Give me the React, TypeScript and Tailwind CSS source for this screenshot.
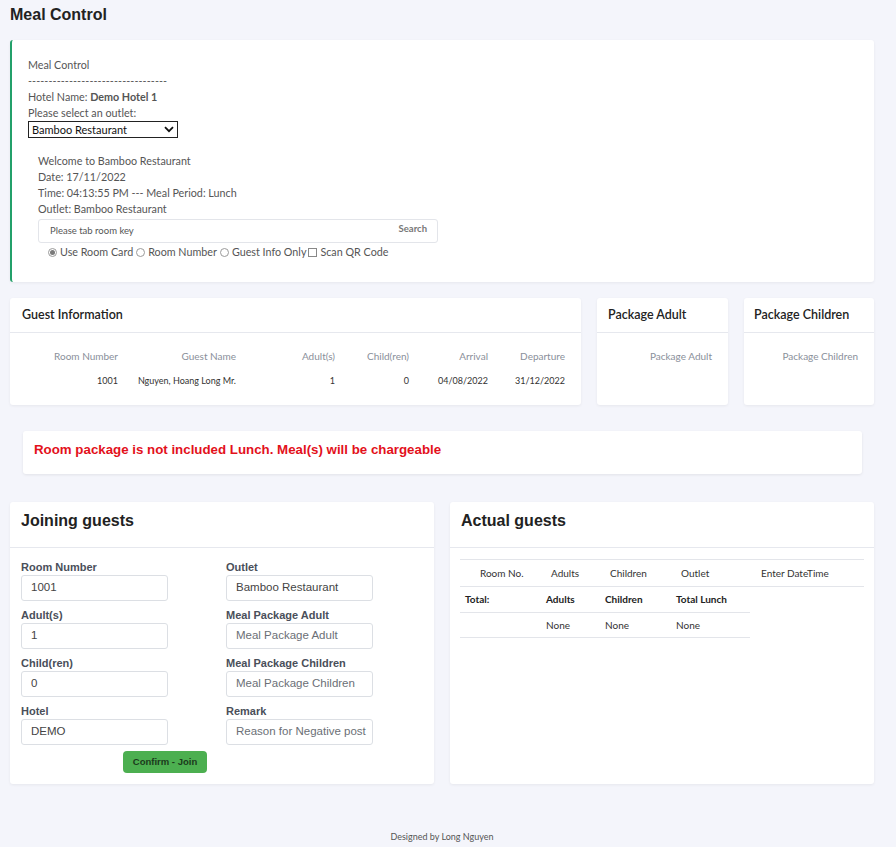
import React from "react";

const seg = { fontFamily: "Lato, 'Open Sans', sans-serif" };
const arial = { fontFamily: "'Liberation Sans', Arial, sans-serif" };

function Radio({ checked }: { checked?: boolean }) {
  return (
    <span className="inline-flex w-[9px] h-[9px] rounded-full border border-[#9a9a9a] items-center justify-center mr-[3px] bg-white">
      {checked && <span className="w-[5px] h-[5px] rounded-full bg-[#7a7a7a]" />}
    </span>
  );
}

function Field({ label, value, muted }: { label: string; value: string; muted?: boolean }) {
  return (
    <div className="flex flex-col mb-[7px]">
      <div className="text-[11px] leading-[14px] font-bold text-[#4a4f5a] mb-px" style={arial}>{label}</div>
      <div
        className={`w-[147px] h-[26px] border border-[#dcdfe4] rounded-[3px] pl-[9px] flex items-center text-[11.5px] bg-white ${muted ? "text-[#6b6f76]" : "text-[#444]"}`}
        style={arial}
      >
        {value}
      </div>
    </div>
  );
}

export default function App() {
  return (
    <div className="min-h-[847px] bg-[#f4f5fb] pl-[10px] pr-[22px] text-[#555]" style={seg}>
      <div className="h-[40px] pt-[5px]">
        <h1 className="text-[16px] leading-[20px] font-bold text-[#222]" style={arial}>Meal Control</h1>
      </div>

      {/* Card 1 */}
      <div className="bg-white border-l-2 border-[#23a06a] rounded-[3px] shadow-[0_1px_3px_rgba(0,0,0,0.06)] pl-[16px] pt-[17px] pb-[22px] text-[10.75px] leading-[16px] text-[#555]">
        <div>Meal Control</div>
        <div className="tracking-[0.1px]">----------------------------------</div>
        <div>Hotel Name: <span className="font-bold">Demo Hotel 1</span></div>
        <div>Please select an outlet:</div>
        <div className="w-[150px] h-[17px] border border-[#222] flex items-center justify-between px-[3px] text-[11px] text-[#111]">
          <span>Bamboo Restaurant</span>
          <svg width="10" height="7" viewBox="0 0 10 7"><path d="M1 1.2 L5 5.2 L9 1.2" stroke="#111" strokeWidth="1.8" fill="none" /></svg>
        </div>
        <div className="pl-[10px] mt-[15px]">
          <div>Welcome to Bamboo Restaurant</div>
          <div>Date: 17/11/2022</div>
          <div>Time: 04:13:55 PM --- Meal Period: Lunch</div>
          <div>Outlet: Bamboo Restaurant</div>
          <div className="mt-[2px] w-[400px] h-[24px] border border-[#e3e5ea] rounded-[3px] flex items-center justify-between pl-[11px] pr-[10px]">
            <span className="text-[9.5px] text-[#555]">Please tab room key</span>
            <span className="text-[9.5px] font-bold text-[#777] -mt-[4px]">Search</span>
          </div>
          <div className="pl-[10px] flex items-center h-[16px] mt-px text-[10.75px] text-[#555]">
            <Radio checked /><span className="mr-[3px]">Use Room Card</span>
            <Radio /><span className="mr-[3px]">Room Number</span>
            <Radio /><span className="mr-[2px]">Guest Info Only</span>
            <span className="inline-block w-[9px] h-[9px] border border-[#888] mr-[3px]" />
            <span>Scan QR Code</span>
          </div>
        </div>
      </div>

      {/* Row 2 */}
      <div className="flex gap-[16px] mt-[16px]">
        <div className="w-[571px] h-[107px] bg-white rounded-[3px] shadow-[0_1px_3px_rgba(0,0,0,0.06)]">
          <div className="h-[35px] border-b border-[#e6e8ee] flex items-center pl-[12px] text-[12.5px] font-semibold text-[#222]">Guest Information</div>
          <div className="pl-[12px] pt-[15px] text-right">
            <div className="flex h-[16px] items-center text-[#8a8f9a] text-[10px]">
              <div className="w-[96px]">Room Number</div>
              <div className="w-[118px]">Guest Name</div>
              <div className="w-[99px]">Adult(s)</div>
              <div className="w-[74px]">Child(ren)</div>
              <div className="w-[79px]">Arrival</div>
              <div className="w-[77px]">Departure</div>
            </div>
            <div className="flex h-[16px] items-center mt-[9px] text-[#333] text-[9px]">
              <div className="w-[96px]">1001</div>
              <div className="w-[118px]">Nguyen, Hoang Long Mr.</div>
              <div className="w-[99px]">1</div>
              <div className="w-[74px]">0</div>
              <div className="w-[79px]">04/08/2022</div>
              <div className="w-[77px]">31/12/2022</div>
            </div>
          </div>
        </div>
        <div className="w-[131px] h-[107px] bg-white rounded-[3px] shadow-[0_1px_3px_rgba(0,0,0,0.06)]">
          <div className="h-[35px] border-b border-[#e6e8ee] flex items-center pl-[11px] text-[12.5px] font-semibold text-[#222]">Package Adult</div>
          <div className="pr-[16px] pt-[15px] text-[10px] text-right text-[#8a8f9a] leading-[16px]">Package Adult</div>
        </div>
        <div className="w-[130px] h-[107px] bg-white rounded-[3px] shadow-[0_1px_3px_rgba(0,0,0,0.06)]">
          <div className="h-[35px] border-b border-[#e6e8ee] flex items-center pl-[10px] text-[12.5px] font-semibold text-[#222]">Package Children</div>
          <div className="pr-[16px] pt-[15px] text-[10px] text-right text-[#8a8f9a] leading-[16px]">Package Children</div>
        </div>
      </div>

      {/* Alert */}
      <div className="ml-[13px] mr-[12px] mt-[26px] h-[43px] bg-white rounded-[3px] shadow-[0_1px_3px_rgba(0,0,0,0.08)] flex items-center pl-[11px] pb-[6px]">
        <span className="text-[13.3px] font-bold text-[#e3111b]" style={arial}>Room package is not included Lunch. Meal(s) will be chargeable</span>
      </div>

      {/* Bottom */}
      <div className="flex gap-[16px] mt-[28px]">
        <div className="w-[424px] h-[282px] bg-white rounded-[3px] shadow-[0_1px_3px_rgba(0,0,0,0.06)]">
          <div className="h-[46px] border-b border-[#e6e8ee] flex items-start pt-[9px] pl-[11px] text-[16px] leading-[20px] font-bold text-[#222]" style={arial}>Joining guests</div>
          <div className="pl-[11px] pt-[12px]">
            <div className="flex">
              <div className="w-[205px]">
                <Field label="Room Number" value="1001" />
                <Field label="Adult(s)" value="1" />
                <Field label="Child(ren)" value="0" />
                <Field label="Hotel" value="DEMO" />
              </div>
              <div>
                <Field label="Outlet" value="Bamboo Restaurant" />
                <Field label="Meal Package Adult" value="Meal Package Adult" muted />
                <Field label="Meal Package Children" value="Meal Package Children" muted />
                <Field label="Remark" value="Reason for Negative post" muted />
              </div>
            </div>
            <div className="ml-[102px] -mt-[1px] w-[84px] h-[22px] bg-[#4caf50] rounded-[4px] flex items-center justify-center text-[9.5px] font-bold text-[#1b3a1c]" style={arial}>Confirm - Join</div>
          </div>
        </div>

        <div className="w-[424px] h-[282px] bg-white rounded-[3px] shadow-[0_1px_3px_rgba(0,0,0,0.06)]">
          <div className="h-[46px] border-b border-[#e6e8ee] flex items-start pt-[9px] pl-[11px] text-[16px] leading-[20px] font-bold text-[#222]" style={arial}>Actual guests</div>
          <div className="px-[10px] pt-[11px] text-[10px] text-[#333]">
            <div className="border-t border-b border-[#e3e5ea] h-[28px] flex items-center">
              <div className="w-[91px] pl-[20px]">Room No.</div>
              <div className="w-[59px]">Adults</div>
              <div className="w-[71px]">Children</div>
              <div className="w-[80px]">Outlet</div>
              <div>Enter DateTime</div>
            </div>
            <div className="w-[290px]">
              <div className="border-b border-[#e3e5ea] h-[26px] flex items-center font-bold text-[#222]">
                <div className="w-[81px] pl-[5px]">Total:</div>
                <div className="w-[59px] pl-[5px]">Adults</div>
                <div className="w-[71px] pl-[5px]">Children</div>
                <div className="w-[79px] pl-[5px]">Total Lunch</div>
              </div>
              <div className="border-b border-[#e3e5ea] h-[25px] flex items-center">
                <div className="w-[81px] pl-[5px]"></div>
                <div className="w-[59px] pl-[5px]">None</div>
                <div className="w-[71px] pl-[5px]">None</div>
                <div className="w-[79px] pl-[5px]">None</div>
              </div>
            </div>
          </div>
        </div>
      </div>

      <div className="mt-[46px] text-center text-[9px] text-[#555]">Designed by Long Nguyen</div>
    </div>
  );
}
